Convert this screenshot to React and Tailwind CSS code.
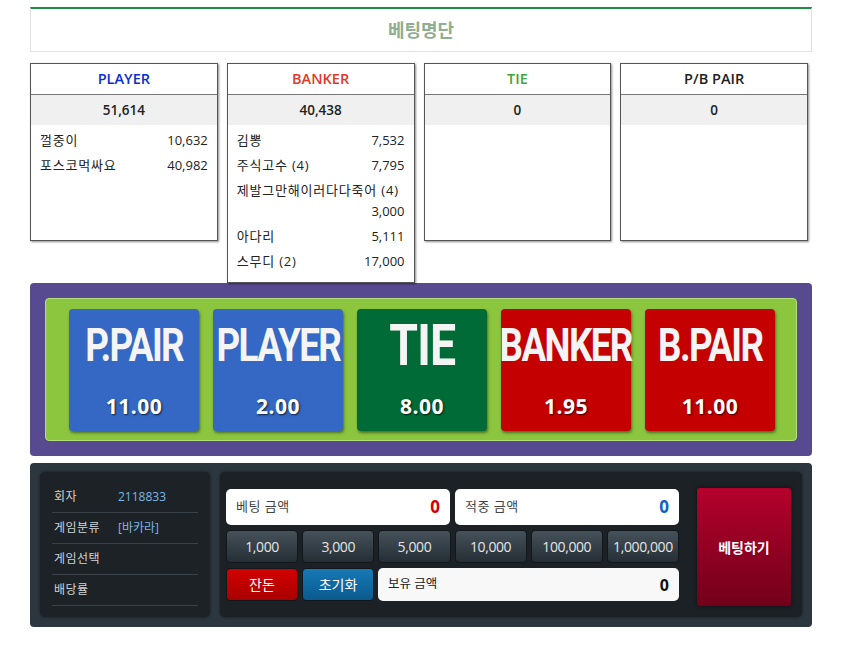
import React from "react";

const F = { fontFamily: '"Open Sans", "Noto Sans CJK KR", sans-serif' };

function BetBtn({ label, odds, bg, big }) {
  return (
    <div className={`w-[130px] h-[122px] rounded-[4px] ${bg} shadow-[1px_2px_3px_rgba(0,0,0,0.45)] flex flex-col items-center text-white`}>
      <div
        className={`mt-[10px] ${big ? "text-[58px] tracking-[-1px]" : "text-[46px] tracking-[-2px]"} font-bold leading-[52px] scale-x-[0.8] whitespace-nowrap text-[#f4f4f4]`}
        style={{ fontFamily: '"Roboto", "Liberation Sans", sans-serif' }}
      >
        {label}
      </div>
      <div
        className="mt-[22px] text-[21px] font-bold leading-[26px] tracking-[0.5px] [text-shadow:1px_1px_2px_rgba(0,0,0,0.7)]"
        style={{ fontFamily: '"Open Sans", sans-serif' }}
      >
        {odds}
      </div>
    </div>
  );
}

function Chip({ children }) {
  return (
    <div className="h-[33px] flex-1 rounded-[4px] border border-[#12171b] bg-gradient-to-b from-[#46525b] to-[#252e35] flex items-center justify-center text-[14px] text-[#e4e4e4] tracking-[-0.4px]">
      {children}
    </div>
  );
}

function CardInner({ title, color, total, rows }) {
  return (
    <>
      <div className={`h-[31px] flex items-center justify-center border-b border-[#777] text-[14.5px] font-semibold ${color}`}>
        {title}
      </div>
      <div className="h-[30px] flex items-center justify-center bg-[#f0f0f0] text-[13.5px] font-semibold text-[#222]">
        {total}
      </div>
      <div className="px-[9px] pt-[5px] pb-[10px] flex flex-col gap-[4px]">
        {rows.map((r, i) => (
          <div key={i} className="flex flex-wrap justify-between text-[13px] leading-[21px] text-[#222]">
            <span className="tracking-[0.8px]">{r[0]}</span>
            <span className="ml-auto">{r[1]}</span>
          </div>
        ))}
      </div>
    </>
  );
}

export default function App() {
  return (
    <div className="w-[842px] h-[656px] bg-white" style={F}>
      <div className="ml-[30px] w-[782px] pt-[7px]">
        <div className="h-[45px] border-t-2 border-t-[#1e8c45] border-x border-b border-[#e2e2e2] flex items-center justify-center">
          <span className="text-[18px] font-bold text-[#8fae8f]">베팅명단</span>
        </div>

        <div className="mt-[11px] w-[778px] grid grid-cols-4 gap-[9px] items-start">
          <div className="h-[178px] border border-[#555] bg-white shadow-[1px_1px_2px_rgba(0,0,0,0.45)]">
            <CardInner title="PLAYER" color="text-[#0a2ed6]" total="51,614" rows={[["껄중이", "10,632"], ["포스코먹싸요", "40,982"]]} />
          </div>
          <div className="border border-[#555] bg-white shadow-[1px_1px_2px_rgba(0,0,0,0.45)]">
            <CardInner
              title="BANKER"
              color="text-[#e0392b]"
              total="40,438"
              rows={[
                ["김뽕", "7,532"],
                ["주식고수 (4)", "7,795"],
                ["제발그만해이러다다죽어 (4)", "3,000"],
                ["아다리", "5,111"],
                ["스무디 (2)", "17,000"],
              ]}
            />
          </div>
          <div className="h-[178px] border border-[#555] bg-white shadow-[1px_1px_2px_rgba(0,0,0,0.45)]">
            <CardInner title="TIE" color="text-[#3fa535]" total="0" rows={[]} />
          </div>
          <div className="h-[178px] border border-[#555] bg-white shadow-[1px_1px_2px_rgba(0,0,0,0.45)]">
            <CardInner title="P/B PAIR" color="text-[#222] font-normal" total="0" rows={[]} />
          </div>
        </div>

        <div className="mt-0 h-[173px] rounded-[4px] bg-[#574a91] p-[15px]">
          <div className="h-[143px] rounded-[4px] bg-[#8cc63f] border border-[#b5df7e] flex justify-center gap-[14px] pt-[10px] pl-[2px]">
            <BetBtn label="P.PAIR" odds="11.00" bg="bg-[#3468c4]" />
            <BetBtn label="PLAYER" odds="2.00" bg="bg-[#3468c4]" />
            <BetBtn label="TIE" odds="8.00" bg="bg-[#006b37]" big />
            <BetBtn label="BANKER" odds="1.95" bg="bg-[#c40000]" />
            <BetBtn label="B.PAIR" odds="11.00" bg="bg-[#c40000]" />
          </div>
        </div>

        <div className="mt-[7px] h-[164px] rounded-[4px] bg-[#2c363e] p-[9px] pl-[10px] flex gap-[10px]">
          <div className="w-[170px] h-[145px] rounded-[5px] bg-[#1d2227] px-[12px] pt-[10px] shadow-[0_0_3px_rgba(0,0,0,0.5)]">
            {[
              ["회자", "2118833"],
              ["게임분류", "[바카라]"],
              ["게임선택", ""],
              ["배당률", ""],
            ].map((r, i) => (
              <div key={i} className="h-[31px] flex items-center border-b border-[#3a4147] text-[12px]">
                <span className="w-[66px] pl-[2px] text-[#cfd3d6] tracking-[0.5px]">{r[0]}</span>
                <span className="text-[#7bb6e4]">{r[1]}</span>
              </div>
            ))}
          </div>

          <div className="w-[582px] h-[145px] rounded-[5px] bg-[#1c2126] pl-[6px] pt-[17px] flex shadow-[0_0_3px_rgba(0,0,0,0.5)]">
            <div className="w-[453px] flex flex-col gap-[5px]">
              <div className="flex gap-[5px]">
                <div className="h-[36px] w-[224px] rounded-[5px] bg-white flex items-center justify-between px-[10px]">
                  <span className="text-[13px] text-[#444] tracking-[0.5px]">베팅 금액</span>
                  <span className="text-[17px] font-bold text-[#d40000]">0</span>
                </div>
                <div className="h-[36px] flex-1 rounded-[5px] bg-white flex items-center justify-between px-[10px]">
                  <span className="text-[13px] text-[#444] tracking-[0.5px]">적중 금액</span>
                  <span className="text-[17px] font-bold text-[#0a63c9]">0</span>
                </div>
              </div>
              <div className="flex gap-[4px]">
                <Chip>1,000</Chip>
                <Chip>3,000</Chip>
                <Chip>5,000</Chip>
                <Chip>10,000</Chip>
                <Chip>100,000</Chip>
                <Chip>1,000,000</Chip>
              </div>
              <div className="flex gap-[4px]">
                <div className="w-[72px] h-[33px] rounded-[4px] border border-[#12171b] bg-gradient-to-b from-[#d40000] to-[#a80000] flex items-center justify-center text-[14px] text-white">
                  잔돈
                </div>
                <div className="w-[72px] h-[33px] rounded-[4px] border border-[#12171b] bg-gradient-to-b from-[#1679b6] to-[#0b5a8e] flex items-center justify-center text-[14px] text-white">
                  초기화
                </div>
                <div className="flex-1 h-[33px] rounded-[5px] bg-[#f8f8f8] flex items-center justify-between pl-[10px] pr-[10px]">
                  <span className="text-[12.5px] text-[#222]">보유 금액</span>
                  <span className="text-[16px] font-bold text-[#111]">0</span>
                </div>
              </div>
            </div>
            <div className="ml-[18px] mt-[-1px] w-[94px] h-[118px] rounded-[3px] bg-gradient-to-b from-[#b5002c] to-[#72001a] flex items-center justify-center shadow-[0_0_4px_rgba(0,0,0,0.6)]">
              <span className="text-[14px] font-bold text-white">베팅하기</span>
            </div>
          </div>
        </div>
      </div>
    </div>
  );
}
